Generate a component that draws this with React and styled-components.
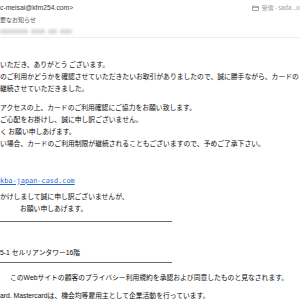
import React from 'react'
import styled, { createGlobalStyle } from 'styled-components'

const GlobalStyle = createGlobalStyle`
  html, body {
    margin: 0;
    padding: 0;
    background: #fff;
  }
  body {
    width: 300px;
    height: 300px;
    overflow: hidden;
    font-family: "Noto Sans CJK JP", "Liberation Sans", sans-serif;
  }
`;

const Page = styled.div`
  width: 300px;
  height: 300px;
  overflow: hidden;
  color: #222;
`;

const Header = styled.header`
  height: 38px;
  box-sizing: border-box;
  padding-top: 3px;
  border-bottom: 1px solid #ededed;
`;

const FromRow = styled.div`
  display: flex;
  justify-content: space-between;
  align-items: center;
  height: 9px;
`;

const Sender = styled.span`
  font-family: "Liberation Sans", "Noto Sans CJK JP", sans-serif;
  font-size: 6.8px;
  color: #3a3a3a;
  white-space: nowrap;
`;

const Folder = styled.span`
  display: flex;
  align-items: center;
  gap: 2px;
  font-size: 6px;
  color: #9a9a9a;
  white-space: nowrap;
`;

const Subject = styled.div`
  margin-top: 3px;
  font-size: 6px;
  color: #555;
  white-space: nowrap;
`;

const Masked = styled.div`
  display: flex;
  gap: 3px;
  margin-top: 5px;
  filter: blur(1.2px);
`;

const Chunk = styled.span`
  display: block;
  width: ${p => p.$w}px;
  height: 5px;
  background: #dedede;
`;

const Body = styled.main`
  padding-top: 21px;
`;

const Para = styled.div`
  margin-bottom: ${p => p.$gap ?? 5}px;
`;

const Line = styled.div`
  font-size: 6.8px;
  line-height: 11.8px;
  white-space: nowrap;
  color: #0c0c0c;
  padding-left: ${p => p.$indent ?? 0}px;
`;

const Link = styled.a`
  font-family: "DejaVu Sans Mono", "Liberation Mono", monospace;
  font-size: 6.9px;
  color: #2266d8;
  text-decoration: underline;
`;

const Rule = styled.hr`
  width: 172px;
  margin: 0;
  border: 0;
  border-top: 1.5px solid #6a6a6a;
`;

const Footer = styled.footer`
  display: flex;
  flex-direction: column;
  padding-top: 1px;
`;

const Address = styled.div`
  font-family: "Liberation Sans", "Noto Sans CJK JP", sans-serif;
  font-size: 6.8px;
  line-height: 11px;
  white-space: nowrap;
  color: #0c0c0c;
  margin: 25px 0 4px;
`;

const Note = styled.div`
  font-family: "Liberation Sans", "Noto Sans CJK JP", sans-serif;
  font-size: 6.8px;
  line-height: 11px;
  white-space: nowrap;
  color: #0c0c0c;
  padding-left: ${p => p.$indent ?? 0}px;
  margin-top: ${p => p.$top ?? 0}px;
`;

function FolderIcon() {
  return (
    <svg width="7" height="6" viewBox="0 0 7 6" fill="none" stroke="#8a8a8a" strokeWidth="0.8">
      <path d="M0.5 1 H2.6 L3.2 1.7 H6.5 V5.5 H0.5 Z" />
      <path d="M0.5 2.4 H6.5" />
    </svg>
  );
}

export default function App() {
  return (
    <Page>
      <GlobalStyle />
      <Header>
        <FromRow>
          <Sender>c-meisai@kfm254.com&gt;</Sender>
          <Folder><FolderIcon />受信 - sada...o</Folder>
        </FromRow>
        <Subject>要なお知らせ</Subject>
        <Masked>
          <Chunk $w={28} />
          <Chunk $w={14} />
          <Chunk $w={9} />
          <Chunk $w={12} />
        </Masked>
      </Header>
      <Body>
        <Para $gap={8}>
          <Line>いただき、ありがとう ございます。</Line>
          <Line>のご利用かどうかを確認させていただきたいお取引がありましたので、誠に勝手ながら、カードの</Line>
          <Line>継続させていただきました。</Line>
        </Para>
        <Para $gap={25}>
          <Line>アクセスの上、カードのご利用確認にご協力をお願い致します。</Line>
          <Line>ご心配をお掛けし、誠に申し訳ございません。</Line>
          <Line>く お願い申しあげます。</Line>
          <Line>い場合、カードのご利用制限が継続されることもございますので、予めご了承下さい。</Line>
        </Para>
        <Para $gap={4}>
          <Line><Link href="#">kba-japan-casd.com</Link></Line>
        </Para>
        <Para $gap={5}>
          <Line>かけしまして誠に申し訳ございませんが、</Line>
          <Line $indent={20}>お願い申しあげます。</Line>
        </Para>
        <Footer>
          <Rule />
          <Address>5-1 セルリアンタワー16階</Address>
          <Rule />
          <Note $indent={10} $top={9}>このWebサイトの顧客のプライバシー利用規約を承認および同意したものと見なされます。</Note>
          <Note $top={7}>ard. Mastercardは、機会均等雇用主として企業活動を行っています。</Note>
        </Footer>
      </Body>
    </Page>
  )
}
